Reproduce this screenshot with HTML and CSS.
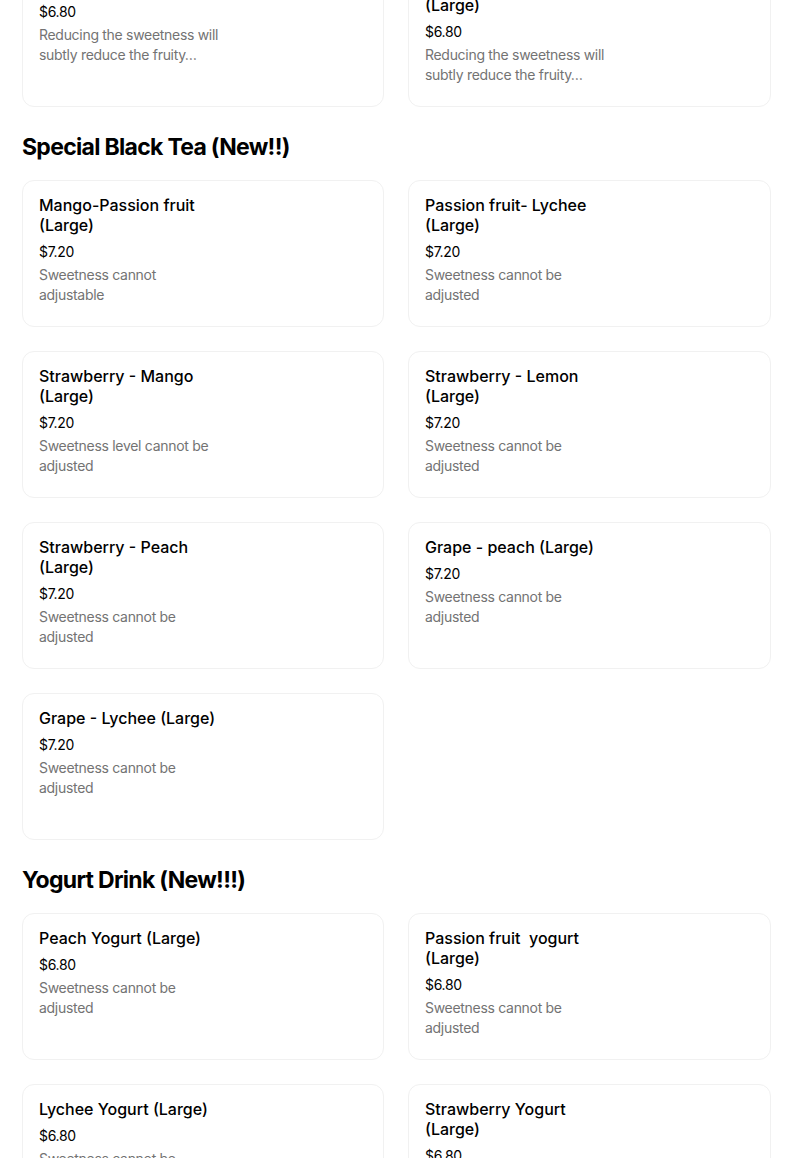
FILE: index.html
```html
<!DOCTYPE html>
<html lang="en">
<head>
<meta charset="utf-8">
<title>Menu</title>
<link rel="stylesheet" href="styles.css">
</head>
<body>
<main class="menu">
  <section class="section section-first">
    <div class="grid">
      <article class="card">
        <div class="info">
          <h3 class="title">Peach Fruit Tea (Large)</h3>
          <div class="price">$6.80</div>
          <div class="desc">Reducing the sweetness will subtly reduce the fruity…</div>
        </div>
      </article>
      <article class="card">
        <div class="info">
          <h3 class="title">Passion fruit- Lychee (Large)</h3>
          <div class="price">$6.80</div>
          <div class="desc">Reducing the sweetness will subtly reduce the fruity…</div>
        </div>
      </article>
    </div>
  </section>

  <section class="section">
    <h2 class="heading">Special Black Tea (New!!)</h2>
    <div class="grid">
      <article class="card"><div class="info">
        <h3 class="title">Mango-Passion fruit (Large)</h3>
        <div class="price">$7.20</div>
        <div class="desc">Sweetness cannot adjustable</div>
      </div></article>
      <article class="card"><div class="info">
        <h3 class="title">Passion fruit- Lychee (Large)</h3>
        <div class="price">$7.20</div>
        <div class="desc">Sweetness cannot be adjusted</div>
      </div></article>
      <article class="card"><div class="info">
        <h3 class="title">Strawberry - Mango (Large)</h3>
        <div class="price">$7.20</div>
        <div class="desc">Sweetness level cannot be adjusted</div>
      </div></article>
      <article class="card"><div class="info">
        <h3 class="title">Strawberry - Lemon (Large)</h3>
        <div class="price">$7.20</div>
        <div class="desc">Sweetness cannot be adjusted</div>
      </div></article>
      <article class="card"><div class="info">
        <h3 class="title">Strawberry - Peach (Large)</h3>
        <div class="price">$7.20</div>
        <div class="desc">Sweetness cannot be adjusted</div>
      </div></article>
      <article class="card"><div class="info">
        <h3 class="title">Grape - peach (Large)</h3>
        <div class="price">$7.20</div>
        <div class="desc">Sweetness cannot be adjusted</div>
      </div></article>
      <article class="card"><div class="info">
        <h3 class="title">Grape - Lychee (Large)</h3>
        <div class="price">$7.20</div>
        <div class="desc">Sweetness cannot be adjusted</div>
      </div></article>
    </div>
  </section>

  <section class="section">
    <h2 class="heading">Yogurt Drink (New!!!)</h2>
    <div class="grid">
      <article class="card"><div class="info">
        <h3 class="title">Peach Yogurt (Large)</h3>
        <div class="price">$6.80</div>
        <div class="desc">Sweetness cannot be adjusted</div>
      </div></article>
      <article class="card"><div class="info">
        <h3 class="title">Passion fruit&nbsp; yogurt (Large)</h3>
        <div class="price">$6.80</div>
        <div class="desc">Sweetness cannot be adjusted</div>
      </div></article>
      <article class="card"><div class="info">
        <h3 class="title">Lychee Yogurt (Large)</h3>
        <div class="price">$6.80</div>
        <div class="desc">Sweetness cannot be adjusted</div>
      </div></article>
      <article class="card"><div class="info">
        <h3 class="title">Strawberry Yogurt (Large)</h3>
        <div class="price">$6.80</div>
        <div class="desc">Sweetness cannot be adjusted</div>
      </div></article>
    </div>
  </section>
</main>
</body>
</html>
```

FILE: styles.css
```css
html, body {
  margin: 0;
  padding: 0;
  background: #ffffff;
}

body {
  font-family: "Inter", "Roboto", "Liberation Sans", sans-serif;
  color: #000000;
  overflow: hidden;
}

.menu {
  width: 749px;
  margin-left: 22px;
}

.section-first {
  margin-top: -40px;
}

.heading {
  margin: 24px 0 17px;
  font-size: 23px;
  line-height: 32px;
  font-weight: 700;
  letter-spacing: -0.7px;
}

.grid {
  display: grid;
  grid-template-columns: 362px 363px;
  gap: 24px;
}

.card {
  box-sizing: border-box;
  min-height: 147px;
  border: 1px solid #f1f1f1;
  border-radius: 12px;
  padding: 14px 16px 16px;
  background: #ffffff;
}

.info {
  width: 184px;
}

.title {
  margin: 0;
  font-size: 16px;
  line-height: 20px;
  font-weight: 500;
}

.price {
  margin-top: 7px;
  font-size: 14px;
  line-height: 20px;
  letter-spacing: -0.3px;
}

.desc {
  margin-top: 3px;
  font-size: 14px;
  line-height: 20px;
  letter-spacing: -0.3px;
  color: #737373;
}
```
